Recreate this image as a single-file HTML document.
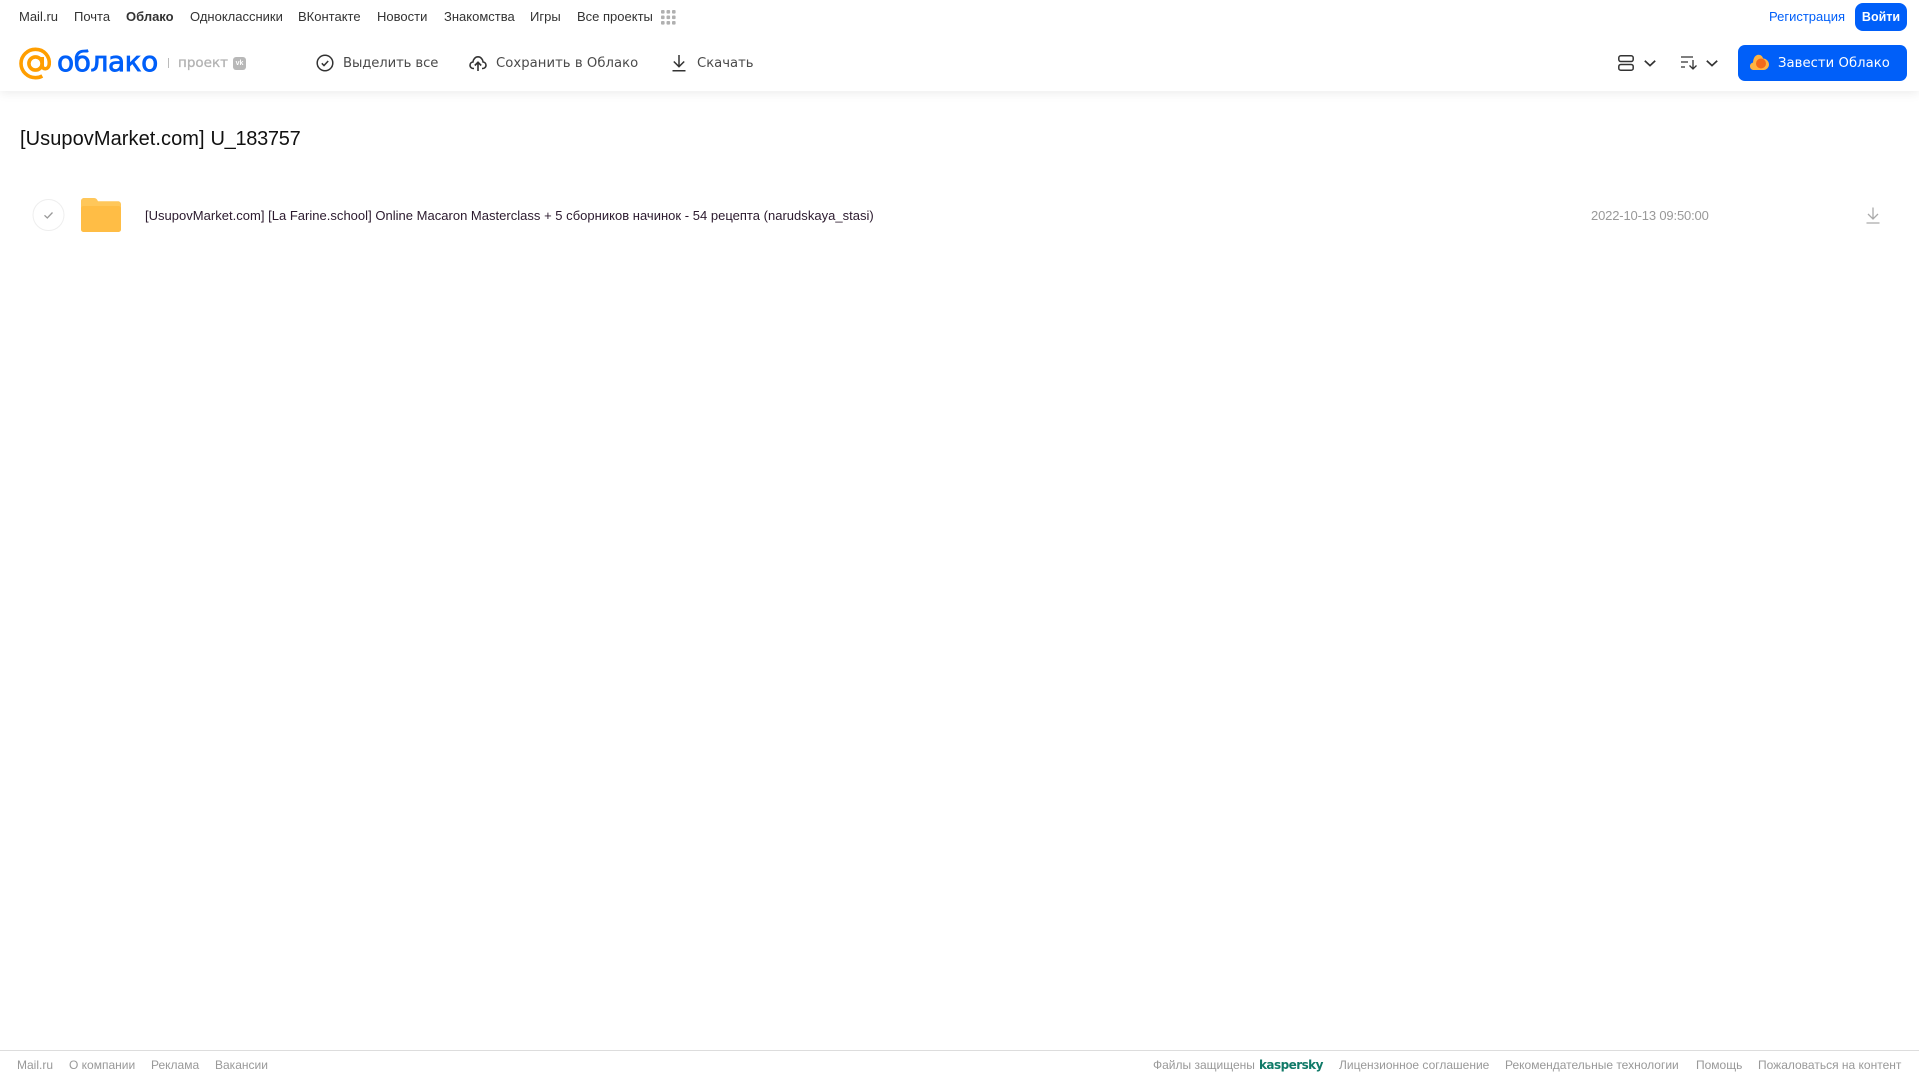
<!DOCTYPE html>
<html lang="ru"><head><meta charset="utf-8"><title>Облако</title>
<style>
html,body{margin:0;padding:0;background:#fff;width:1919px;height:1079px;overflow:hidden}
body{position:relative;font-family:"Liberation Sans",Arial,sans-serif}
.t{position:absolute;white-space:nowrap;line-height:20px}
.n{top:7px;font-size:13px;color:#333}
.b{top:54px;font-family:"DejaVu Sans",sans-serif;font-size:13.2px;color:#4a4a4a}
.f{top:1055px;font-size:12px;color:#999}
svg{position:absolute;overflow:visible}
#hd{position:absolute;left:0;top:0;width:1919px;height:91px;background:#fff;box-shadow:0 2px 10px rgba(0,0,0,.08)}
</style></head><body>
<div id="hd"></div>
<span class="t n" style="left:19px">Mail.ru</span>
<span class="t n" style="left:74px">Почта</span>
<span class="t n" style="left:126px;font-weight:bold">Облако</span>
<span class="t n" style="left:190px">Одноклассники</span>
<span class="t n" style="left:298px">ВКонтакте</span>
<span class="t n" style="left:377px">Новости</span>
<span class="t n" style="left:444px">Знакомства</span>
<span class="t n" style="left:530px">Игры</span>
<span class="t n" style="left:577px">Все проекты</span>
<svg style="left:661px;top:10px" width="15" height="15" fill="#b0b0b0"><rect x="0" y="0" width="3.6" height="3.6" rx="1"/><rect x="5.5" y="0" width="3.6" height="3.6" rx="1"/><rect x="11" y="0" width="3.6" height="3.6" rx="1"/><rect x="0" y="5.5" width="3.6" height="3.6" rx="1"/><rect x="5.5" y="5.5" width="3.6" height="3.6" rx="1"/><rect x="11" y="5.5" width="3.6" height="3.6" rx="1"/><rect x="0" y="11" width="3.6" height="3.6" rx="1"/><rect x="5.5" y="11" width="3.6" height="3.6" rx="1"/><rect x="11" y="11" width="3.6" height="3.6" rx="1"/></svg>
<span class="t n" style="left:1769px;color:#005ff9">Регистрация</span>
<div style="position:absolute;left:1855px;top:3px;width:52px;height:28px;background:#005ff9;border-radius:8px"></div>
<span class="t n" style="left:1855px;width:52px;text-align:center;color:#fff;font-weight:bold;font-size:12.5px">Войти</span>

<svg style="left:19px;top:47px" width="33" height="33" viewBox="0 0 33 33" fill="none" stroke="#ff9e00" stroke-width="3.6"><circle cx="16.5" cy="16.5" r="6.6"/><path d="M23.2 10v8.5c0 4.500 6.300 4.500 7-1 .9-8-5-15.200-13.700-15.200C8.500 2.300 2 8.700 2 16.500S8.500 30.700 16.500 30.700c2.600 0 4.800-.6 6.800-1.700"/></svg>
<span class="t" style="left:57px;top:44px;line-height:36px;font-family:'DejaVu Sans',sans-serif;font-size:28px;color:#005ff9;-webkit-text-stroke:.8px #005ff9;letter-spacing:-.45px">облако</span>
<div style="position:absolute;left:168px;top:58px;width:1px;height:10px;background:#bbb"></div>
<span class="t" style="left:178px;top:53px;font-family:'DejaVu Sans',sans-serif;font-size:13.5px;color:#b3b3b3;-webkit-text-stroke:.3px #b3b3b3">проект</span>
<div style="position:absolute;left:233px;top:57px;width:13px;height:13px;background:#b8b8b8;border-radius:3px;color:#fff;font-size:7px;font-weight:bold;line-height:13px;text-align:center">vk</div>

<svg style="left:316px;top:54px" width="18" height="18" viewBox="0 0 18 18" fill="none" stroke="#333" stroke-width="1.500"><circle cx="9" cy="9" r="7.800"/><path d="M5.800 9.300l2.200 2.200 4.200-4.500"/></svg>
<span class="t b" style="left:343px;letter-spacing:-.1px">Выделить все</span>
<svg style="left:469px;top:54px" width="18" height="18" viewBox="0 0 18 18" fill="none" stroke="#333" stroke-width="1.600"><path d="M5 14.500H4.500C2.500 14.500 1 13 1 11.200c0-1.700 1.300-3 2.900-3.200C4.300 5 6.400 2.800 9 2.800s4.700 2.200 5.100 5.200c1.600.2 2.900 1.500 2.900 3.200 0 1.800-1.500 3.300-3.500 3.300H13"/><path d="M9 17V8.500M5.800 11.500L9 8.300l3.200 3.200"/></svg>
<span class="t b" style="left:496px;letter-spacing:.05px">Сохранить в Облако</span>
<svg style="left:672px;top:54px" width="14" height="18" viewBox="0 0 14 18" fill="none" stroke="#333" stroke-width="1.500"><path d="M7 1v11.500M1.800 7.500L7 12.700l5.200-5.200M.5 16.800h13"/></svg>
<span class="t b" style="left:697px">Скачать</span>

<svg style="left:1618px;top:55px" width="16" height="16" fill="none" stroke="#333" stroke-width="1.500"><rect x=".8" y=".8" width="14.400" height="5.700" rx="2"/><rect x=".8" y="9.500" width="14.400" height="5.700" rx="2"/></svg>
<svg style="left:1644px;top:60px" width="12" height="7" fill="none" stroke="#333" stroke-width="1.700"><path d="M.8 .8L6 5.600 11.200 .8"/></svg>
<svg style="left:1681px;top:56px" width="17" height="14" fill="none" stroke="#333" stroke-width="1.300"><path d="M0 1h12M0 6h7M0 11h4M12 4v9M8.500 9.500L12 13l3.500-3.500"/></svg>
<svg style="left:1706px;top:60px" width="12" height="7" fill="none" stroke="#333" stroke-width="1.700"><path d="M.8 .8L6 5.600 11.200 .8"/></svg>
<div style="position:absolute;left:1738px;top:45px;width:169px;height:36px;background:#005ff9;border-radius:7px"></div>
<svg style="left:1750px;top:54px" width="19" height="17" viewBox="0 0 19 17"><path d="M4 16C1.500 16 0 14.300 0 12.200 0 10.300 1.400 8.800 3 8.600 3.300 4 5.400 .8 8.500 .8c2.500 0 4 1.700 4.600 3.700 3.200.1 5.900 2.800 5.900 6 0 3-2.500 5.500-5.500 5.500z" fill="#ffb340"/><circle cx="11" cy="9.500" r="5" fill="#f26a1b"/></svg>
<span class="t b" style="left:1778px;color:#fff;letter-spacing:.05px">Завести Облако</span>

<span class="t" style="left:20px;top:127px;line-height:24px;font-size:20px;color:#111;letter-spacing:.07px">[UsupovMarket.com]</span>
<span class="t" style="left:210.500px;top:127px;line-height:24px;font-size:20px;color:#111;letter-spacing:-.3px">U_183757</span>
<svg style="left:32px;top:198px" width="34" height="34" fill="none"><circle cx="16.500" cy="17" r="15.500" stroke="#eee" stroke-width="1"/><path d="M12.500 17.300l2.800 2.700 5.200-5.500" stroke="#999" stroke-width="1.300"/></svg>
<svg style="left:81px;top:198px" width="40" height="34" viewBox="0 0 40 34"><path d="M0 3C0 1.300 1.300 0 3 0h10c1.300 0 2.300.6 3 1.500L17 3.200h20c1.700 0 3 1.300 3 3V31c0 1.700-1.300 3-3 3H3c-1.700 0-3-1.300-3-3z" fill="#ffc75a"/><rect y="8" width="40" height="26" rx="2.500" fill="#ffbd45"/></svg>
<span class="t" style="left:145px;top:206px;font-size:13px;color:#2b1a2e;letter-spacing:.015px">[UsupovMarket.com] [La Farine.school] Online Macaron Masterclass + 5 сборников начинок - 54 рецепта (narudskaya_stasi)</span>
<span class="t" style="left:1591px;top:206px;font-size:13px;color:#999;letter-spacing:-.16px">2022-10-13 09:50:00</span>
<svg style="left:1866px;top:207px" width="14" height="17" fill="none" stroke="#aaa" stroke-width="1.300"><path d="M7 .5v11M2 7l5 5 5-5M.5 16h13"/></svg>

<div style="position:absolute;left:0;top:1050px;width:1919px;height:1px;background:#ddd"></div>
<span class="t f" style="left:17px">Mail.ru</span>
<span class="t f" style="left:69px">О компании</span>
<span class="t f" style="left:151px">Реклама</span>
<span class="t f" style="left:215px">Вакансии</span>
<span class="t f" style="left:1153px">Файлы защищены</span>
<span class="t f" style="left:1259px;font-family:'DejaVu Sans',sans-serif;font-weight:bold;font-size:12px;color:#107a68;letter-spacing:-.55px">kaspersky</span>
<span class="t f" style="left:1339px">Лицензионное соглашение</span>
<span class="t f" style="left:1505px">Рекомендательные технологии</span>
<span class="t f" style="left:1696px">Помощь</span>
<span class="t f" style="left:1758px">Пожаловаться на контент</span>
</body></html>
